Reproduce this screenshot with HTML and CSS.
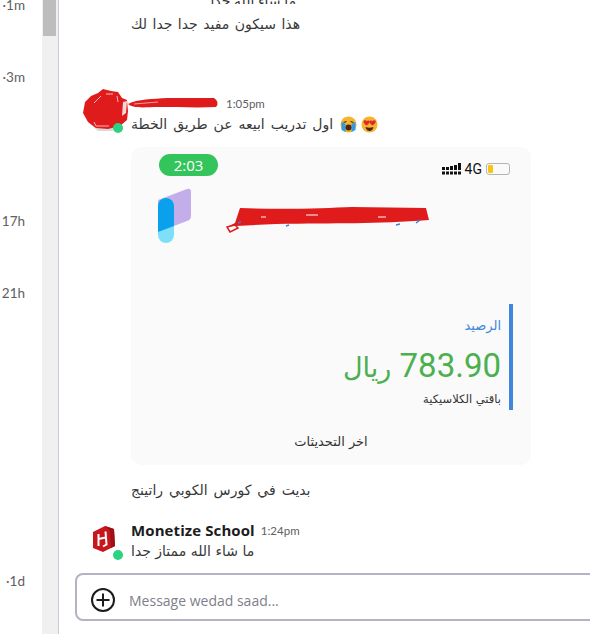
FILE: index.html
```html
<!DOCTYPE html>
<html lang="en">
<head>
    <meta charset="UTF-8">
    <meta name="viewport" content="width=device-width, initial-scale=1.0">
    <title>Chat</title>
    <link rel="stylesheet" href="styles.css">
</head>
<body>
    <div class="app">
        <div class="rail">
            <div class="stamp stamp-1m">·1m</div>
            <div class="stamp stamp-3m">·3m</div>
            <div class="stamp stamp-17h">17h</div>
            <div class="stamp stamp-21h">21h</div>
            <div class="stamp stamp-1d">·1d</div>
        </div>
        <div class="track"><div class="thumb"></div></div>

        <div class="main">
            <div class="clipped" dir="rtl">ما شاء الله جدا</div>
            <div class="line first-line">هذا سيكون مفيد جدا جدا لك</div>

            <div class="msg msg-wedad">
                <div class="avatar">
                    <svg class="scribble-avatar" width="48" height="46" viewBox="0 0 48 46">
                        <path d="M7 34 L16 42 L30 42 L38 36 L24 36 Z" fill="#d9d9d9"/>
                        <path d="M16 4 L21 0 L29 2 L36 3 L40 9 L45 11 L46 22 L45 31 L38 37 L26 40 L14 39 L6 33 L1 24 L3 13 L9 7 Z" fill="#e01b1b"/>
                        <path d="M41 13 L45 12 L44 24 L40 27 Z" fill="#f3d6d6"/>
                        <path d="M12 14 L19 7 M24 5 L31 5 M35 7 L36 13 M12 33 L14 37 L27 37" stroke="#f4b9b9" stroke-width="1" fill="none"/>
                    </svg>
                    <span class="dot"></span>
                </div>
                <div class="body">
                    <div class="head">
                        <svg class="scribble-name" width="92" height="14" viewBox="0 0 92 14">
                            <path d="M0 8 C10 3 24 3 40 2 C56 2 72 2 86 2 Q92 6 88 11 C70 12 50 11 30 11 C18 11 6 13 0 8 Z" fill="#e01b1b"/>
                            <path d="M6 8 L30 6" stroke="#f0a0a0" stroke-width="1"/>
                        </svg>
                        <span class="time">1:05pm</span>
                    </div>
                    <div class="line emoji-line">
                        <span class="emoji-text">اول تدريب ابيعه عن طريق الخطة</span>
                        <svg width="17" height="17" viewBox="0 0 17 17">
                            <circle cx="8.500" cy="8.500" r="8" fill="#f5b32f"/>
                            <path d="M1.500 6 L1.500 14 L5.500 16 L5.500 8 Z M15.500 6 L15.500 14 L11.500 16 L11.500 8 Z" fill="#2f9be6"/>
                            <path d="M3.500 6.500 L6.500 5.500 M10.500 5.500 L13.500 6.500" stroke="#333" stroke-width="1.200" fill="none"/>
                            <ellipse cx="8.500" cy="11.500" rx="3" ry="3" fill="#4a2415"/>
                        </svg>
                        <svg width="17" height="17" viewBox="0 0 17 17">
                            <circle cx="8.500" cy="8.500" r="8" fill="#f5b32f"/>
                            <path d="M2.500 5.500 a1.700 1.700 0 0 1 3.300 0 a1.700 1.700 0 0 1 3 0 C8.800 7.500 6 9 5.500 9.500 C5 9 2.500 7.500 2.500 5.500 Z" fill="#e0262f"/>
                            <path d="M8.500 5.500 a1.700 1.700 0 0 1 3 0 a1.700 1.700 0 0 1 3.300 0 C14.800 7.500 12 9 11.500 9.500 C11 9 8.500 7.500 8.500 5.500 Z" fill="#e0262f"/>
                            <path d="M4.500 11 Q8.500 12.500 12.500 11 Q11.500 15 8.500 15 Q5.500 15 4.500 11 Z" fill="#4a2415"/>
                        </svg>
                    </div>

                    <div class="shot">
                        <div class="shot-status">
                            <span class="pill">2:03</span>
                            <div class="indicators">
                                <svg width="19" height="12" viewBox="0 0 19 12">
                                    <g fill="#111">
                                        <rect x="0" y="4" width="3" height="3"/><rect x="4" y="4" width="3" height="3"/><rect x="8" y="3" width="3" height="4"/><rect x="12" y="2" width="3" height="5"/><rect x="16" y="0" width="3" height="7"/>
                                        <rect x="0" y="8.500" width="3" height="3"/><rect x="4" y="8.500" width="3" height="3"/><rect x="8" y="8.500" width="3" height="3"/><rect x="12" y="8.500" width="3" height="3"/><rect x="16" y="8.500" width="3" height="3"/>
                                    </g>
                                </svg>
                                <span class="net">4G</span>
                                <span class="battery"><span class="battery-level"></span></span>
                            </div>
                        </div>
                        <div class="shot-brand">
                            <svg width="36" height="56" viewBox="0 0 36 56">
                                <path d="M1 12 L30 1 Q34 0 34 4 L34 28 Q34 32 30 33 L1 44 Z" fill="#c3aeea"/>
                                <rect x="1" y="10" width="16" height="45" rx="8" fill="#7ee0f8"/>
                                <path d="M1 18 a8 8 0 0 1 16 0 L17 38 L1 44 Z" fill="#0ba0ec"/>
                            </svg>
                            <svg class="scribble-title" width="206" height="28" viewBox="0 0 206 28">
                                <path d="M14 1 C60 3 100 1 126 0 L200 1 L203 13 C150 17 110 16 50 17 L10 19 L3 24 L1 20 L9 16 Z" fill="#e01b1b"/>
                                <path d="M1 20 L9 18 L12 21 L4 25 Z" fill="#fff" stroke="#e01b1b" stroke-width="1.500"/>
                                <path d="M35 10 L40 10 M80 8 L92 8 M152 10 L160 10" stroke="#f3b0b0" stroke-width="1.500"/>
                                <path d="M12 16 L15 15 M190 16 L194 13 M60 19 L63 18 M170 18 L174 17" stroke="#3f7fd0" stroke-width="1.500"/>
                            </svg>
                        </div>
                        <div class="balance">
                            <div class="balance-label">الرصيد</div>
                            <div class="balance-amount" dir="rtl"><span dir="ltr">783.90</span> <span class="currency">ريال</span></div>
                            <div class="balance-plan">باقتي الكلاسيكية</div>
                        </div>
                        <div class="updates">اخر التحديثات</div>
                    </div>

                    <div class="line after-shot">بديت في كورس الكوبي راتينج</div>
                </div>
            </div>

            <div class="msg msg-school">
                <div class="avatar">
                    <svg width="24" height="27" viewBox="0 0 24 27">
                        <path d="M1 6 L13 0 L22 3 L23 20 L11 26 L1 22 Z" fill="#c8161d"/>
                        <path d="M13 0 L22 3 L23 20 L19 22 L18 5 Z" fill="#9c1016"/>
                        <path d="M6.500 8 L6.500 20 M6.500 13 L13.500 11.500 M13.500 5.500 L14.500 18.500 L11 20.500" stroke="#fff" stroke-width="2" fill="none"/>
                    </svg>
                    <span class="dot"></span>
                </div>
                <div class="body">
                    <div class="head">
                        <span class="name">Monetize School</span>
                        <span class="time">1:24pm</span>
                    </div>
                    <div class="line last-line">ما شاء الله ممتاز جدا</div>
                </div>
            </div>

            <div class="composer">
                <svg width="24" height="24" viewBox="0 0 24 24">
                    <circle cx="12" cy="12" r="11" fill="none" stroke="#1d1c1d" stroke-width="2"/>
                    <path d="M12 5.500 V18.500 M5.500 12 H18.500" stroke="#1d1c1d" stroke-width="2"/>
                </svg>
                <span class="placeholder">Message wedad saad...</span>
            </div>
        </div>
    </div>
</body>
</html>
```

FILE: styles.css
```css
body {
    margin: 0;
    background: #fff;
    font-family: 'Open Sans', 'DejaVu Sans', sans-serif;
    color: #1d1c1d;
}

.app {
    display: flex;
    width: 590px;
    height: 634px;
    overflow: hidden;
}

/* left timestamps */
.rail {
    width: 42px;
    flex: none;
    text-align: right;
    font-family: 'Lato', sans-serif;
    font-size: 13.5px;
    line-height: 16px;
    color: #616061;
    box-sizing: border-box;
    padding-right: 17px;
}

.stamp-1m { margin-top: -3px; }
.stamp-3m { margin-top: 56px; }
.stamp-17h { margin-top: 128px; }
.stamp-21h { margin-top: 56px; }
.stamp-1d { margin-top: 272px; }

.track {
    width: 16px;
    flex: none;
    background: #f0f0f0;
    border-right: 1px solid #c9c9dc;
}

.thumb {
    width: 13px;
    height: 36px;
    margin-left: 1px;
    background: #bdbdbd;
}

.main {
    flex: 1;
    min-width: 0;
    font-size: 14px;
}

.clipped {
    height: 4px;
    width: 165px;
    margin-left: 72px;
    overflow: hidden;
    line-height: 2px;
    color: #333;
}

.line {
    font-family: 'DejaVu Sans', sans-serif;
    font-size: 14px;
    line-height: 22px;
    word-spacing: 1.5px;
    color: #383838;
}

.first-line {
    margin: 9px 0 0 72px;
    word-spacing: 1px;
}

.last-line {
    word-spacing: 0;
}

.msg {
    display: flex;
    position: relative;
}

.msg-wedad {
    margin-top: 58px;
}

.msg-school {
    margin-top: 19px;
}

.avatar {
    width: 72px;
    flex: none;
    position: relative;
}

.scribble-avatar {
    position: absolute;
    left: 23px;
    top: -4px;
}

.msg-school .avatar svg {
    position: absolute;
    left: 33px;
    top: 6px;
}

.dot {
    position: absolute;
    left: 54px;
    top: 30px;
    width: 10px;
    height: 10px;
    border-radius: 50%;
    background: #2bd27f;
}

.body {
    flex: 1;
    min-width: 0;
}

.head {
    display: flex;
    align-items: center;
    gap: 6px;
    height: 20px;
}

.scribble-name {
    margin-left: -3px;
}

.name {
    font-size: 15px;
    font-weight: 700;
    letter-spacing: 0.1px;
}

.time {
    font-family: 'Lato', sans-serif;
    font-size: 11.5px;
    color: #616061;
}

.emoji-line {
    display: flex;
    align-items: center;
    gap: 4px;
}

.emoji-text {
    margin-right: 3px;
}

.shot {
    width: 400px;
    height: 318px;
    margin-top: 12px;
    background: #fafafa;
    border-radius: 10px;
    display: flex;
    flex-direction: column;
}

.shot-status {
    display: flex;
    justify-content: space-between;
    padding: 7px 21px 0 28px;
}

.pill {
    width: 59px;
    height: 22px;
    border-radius: 11px;
    background: #34c45c;
    color: #fff;
    font-size: 15px;
    line-height: 22px;
    text-align: center;
}

.indicators {
    display: flex;
    align-items: center;
    gap: 4px;
    height: 30px;
}

.net {
    font-family: 'Roboto', sans-serif;
    font-size: 14px;
    color: #111;
}

.battery {
    display: block;
    width: 20px;
    height: 8px;
    border: 1px solid #b5b5b5;
    border-radius: 3px;
    padding: 1px;
}

.battery-level {
    display: block;
    width: 5px;
    height: 8px;
    background: #f8c513;
    border-radius: 1px;
}

.shot-brand {
    display: flex;
    align-items: flex-start;
    gap: 33px;
    padding-left: 26px;
    margin-top: 4px;
}

.scribble-title {
    margin-top: 19px;
}

.balance {
    align-self: flex-end;
    margin-top: 60px;
    margin-right: 18px;
    height: 106px;
    box-sizing: border-box;
    border-right: 4px solid #3f86dc;
    padding: 12px 8px 0 0;
    text-align: right;
    font-family: 'DejaVu Sans', sans-serif;
}

.balance-label {
    font-size: 13px;
    line-height: 20px;
    color: #3f86dc;
}

.balance-amount {
    font-family: 'Roboto', 'DejaVu Sans', sans-serif;
    font-size: 33px;
    line-height: 44px;
    letter-spacing: 1px;
    margin-top: 8px;
    color: #4caf50;
}

.currency {
    font-size: 27px;
}

.balance-plan {
    font-size: 11.5px;
    line-height: 18px;
    color: #333;
}

.updates {
    margin-top: 22px;
    text-align: center;
    font-family: 'DejaVu Sans', sans-serif;
    font-size: 13px;
    line-height: 20px;
    color: #333;
}

.after-shot {
    margin-top: 14px;
}

.composer {
    display: flex;
    align-items: center;
    gap: 14px;
    box-sizing: border-box;
    width: 560px;
    height: 48px;
    margin: 11px 0 0 16px;
    padding: 6px 0 0 14px;
    border: 2px solid #b2b3c6;
    border-radius: 8px;
}

.placeholder {
    font-size: 14px;
    color: #80808a;
}
```
